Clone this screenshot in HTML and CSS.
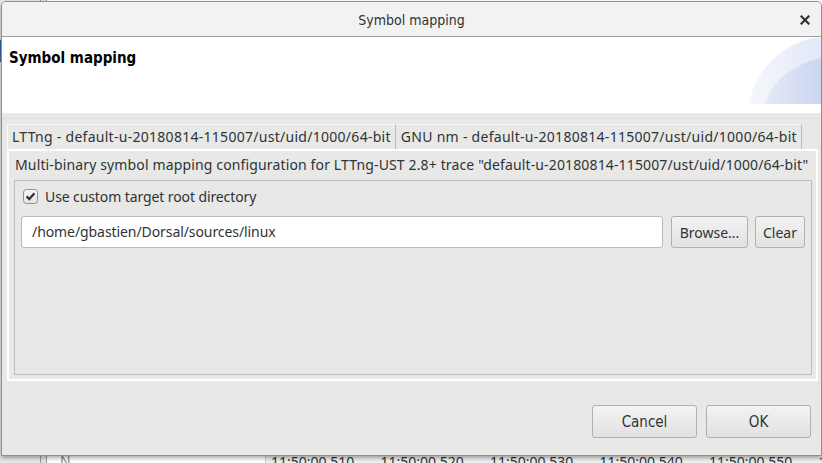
FILE: index.html
```html
<!DOCTYPE html>
<html>
<head>
<meta charset="utf-8">
<title>Symbol mapping</title>
<link rel="stylesheet" href="styles.css">
</head>
<body>
<div class="app">
  <div class="app-side"><span class="app-sel"></span></div>
  <div class="app-divider"></div>
  <div class="app-main">
    <div class="app-fill"></div>
    <div class="app-bottom">
      <div class="app-tree">N</div>
      <div class="app-times">
        <span>11:50:00.510</span>
        <span>11:50:00.520</span>
        <span>11:50:00.530</span>
        <span>11:50:00.540</span>
        <span>11:50:00.550</span>
        <span>1</span>
      </div>
    </div>
  </div>
</div>

<div class="dialog">
  <div class="titlebar">
    <span></span>
    <span class="title">Symbol mapping</span>
    <span class="close">
      <svg width="10" height="10" viewBox="0 0 10 10"><path d="M1.5 1.5 L8.5 8.5 M8.5 1.5 L1.5 8.5" stroke="#2e3436" stroke-width="2.2" stroke-linecap="square"/></svg>
    </span>
  </div>
  <div class="header">
    <div class="header-title">Symbol mapping</div>
    <svg class="header-deco" width="72" height="66" viewBox="0 0 72 66">
      <defs>
        <linearGradient id="g1" x1="0" y1="0" x2="1" y2="0">
          <stop offset="0" stop-color="#f5f7fc"/>
          <stop offset="1" stop-color="#e3e8f7"/>
        </linearGradient>
        <linearGradient id="g2" x1="0" y1="0" x2="1" y2="0">
          <stop offset="0" stop-color="#e4e9f7"/>
          <stop offset="1" stop-color="#ccd6f0"/>
        </linearGradient>
      </defs>
      <path d="M0 66 C4 38 28 8 64 0 L72 0 L72 66 Z" fill="url(#g1)"/>
      <path d="M16 66 C22 44 44 26 72 20 L72 66 Z" fill="url(#g2)"/>
    </svg>
  </div>
  <div class="content">
    <div class="sep"></div>
    <div class="tabs">
      <div class="tab active">LTTng - default-u-20180814-115007/ust/uid/1000/64-bit</div>
      <div class="tab">GNU nm - default-u-20180814-115007/ust/uid/1000/64-bit</div>
    </div>
    <div class="panel">
      <div class="desc">Multi-binary symbol mapping configuration for LTTng-UST 2.8+ trace "default-u-20180814-115007/ust/uid/1000/64-bit"</div>
      <div class="group">
        <div class="check">
          <span class="box">
            <svg width="15" height="15" viewBox="0 0 15 15">
              <defs>
                <linearGradient id="cb" x1="0" y1="0" x2="0" y2="1">
                  <stop offset="0" stop-color="#f7f7f7"/>
                  <stop offset="1" stop-color="#e3e3e3"/>
                </linearGradient>
              </defs>
              <rect x="0.5" y="0.5" width="14" height="14" rx="3" fill="url(#cb)" stroke="#919191"/>
              <path d="M3.6 7.4 L6.3 10.1 L11.4 4.3" fill="none" stroke="#2e3436" stroke-width="2.2"/>
            </svg>
          </span>
          <span>Use custom target root directory</span>
        </div>
        <div class="row">
          <div class="input">/home/gbastien/Dorsal/sources/linux</div>
          <button class="btn browse">Browse...</button>
          <button class="btn clear">Clear</button>
        </div>
      </div>
    </div>
    <div class="actions">
      <button class="btn big">Cancel</button>
      <button class="btn big">OK</button>
    </div>
  </div>
</div>
</body>
</html>
```
FILE: styles.css
```css
* { box-sizing: border-box; }

html, body {
  margin: 0;
  padding: 0;
}

body {
  width: 822px;
  height: 463px;
  overflow: hidden;
  position: relative;
  font-family: "Noto Sans", sans-serif;
  font-size: 14px;
  color: #2e3436;
  background: #ffffff;
}

/* background application */
.app {
  display: flex;
  width: 822px;
  height: 463px;
  overflow: hidden;
}

.app-side {
  flex: none;
  width: 40px;
  background: #e8e8e7;
  position: relative;
}

.app-sel {
  position: absolute;
  left: 0;
  top: 40px;
  width: 2px;
  height: 22px;
  background: #3465a4;
}

.app-divider {
  flex: none;
  width: 7px;
  background: #e4e4e4;
  border-left: 1px solid #9a9a9a;
  border-right: 1px solid #9a9a9a;
}

.app-main {
  flex: 1;
  min-width: 0;
  display: flex;
  flex-direction: column;
  background: #ffffff;
}

.app-fill { flex: 1; }

.app-bottom {
  flex: none;
  height: 10px;
  display: flex;
  overflow: hidden;
  line-height: 19px;
  font-size: 14px;
  color: #2e3436;
}

.app-tree {
  flex: none;
  width: 218px;
  padding-left: 13px;
  margin-top: -2px;
  color: #888888;
}

.app-times {
  flex: 1;
  min-width: 0;
  overflow: hidden;
  display: flex;
  background: #efefef;
  border-left: 1px solid #cfcfcf;
  margin-top: -1px;
}

.app-times span {
  width: 109.5px;
  flex: none;
  padding-left: 5px;
  white-space: nowrap;
}

/* dialog window */
.dialog {
  position: absolute;
  left: 1px;
  top: 1px;
  width: 821px;
  height: 455px;
  border: 1px solid #8f8f8f;
  border-radius: 5px 5px 0 0;
  background: #e8e8e7;
  box-shadow: 0 2px 4px rgba(0, 0, 0, 0.35);
  display: flex;
  flex-direction: column;
  overflow: hidden;
}

.titlebar {
  height: 35px;
  flex: none;
  display: grid;
  grid-template-columns: 1fr auto 1fr;
  align-items: center;
  background: #f2f2f2;
  border-bottom: 1px solid #9d9d9d;
  padding-top: 1px;
}

.title {
  font-family: "DejaVu Sans Condensed", "DejaVu Sans", sans-serif;
  font-stretch: condensed;
  font-size: 14px;
  color: #2e3436;
}

.close {
  justify-self: end;
  margin-right: 11px;
  display: flex;
}

.header {
  height: 76px;
  flex: none;
  background: #ffffff;
  display: flex;
  justify-content: space-between;
  align-items: flex-start;
}

.header-title {
  padding: 12px 0 0 7px;
  font-family: "DejaVu Sans Condensed", "DejaVu Sans", sans-serif;
  font-stretch: condensed;
  font-weight: bold;
  font-size: 15px;
  color: #000000;
}

.header-deco {
  display: block;
  margin-top: 1px;
}

.content {
  flex: 1;
  display: flex;
  flex-direction: column;
  padding: 5px 3px 0 5px;
}

.sep {
  height: 1px;
  background: #dedede;
  margin: 0 -3px 5px -5px;
}

.tabs {
  display: flex;
  height: 25px;
}

.tab {
  padding: 2px 4px 0 4px;
  line-height: 19px;
  white-space: nowrap;
  letter-spacing: 0.28px;
  border-top: 1px solid #f7f7f7;
  border-left: 1px solid #f7f7f7;
  border-right: 1px solid #bdbdbd;
  color: #2e3436;
}

.tab.active {
  background: #e8e8e7;
}

.tab + .tab {
  border-left: none;
  padding-left: 5px;
}

.panel {
  border: 2px solid #ffffff;
  height: 232px;
  padding: 4px 4px 4px 5px;
  display: flex;
  flex-direction: column;
}

.desc {
  padding-left: 1px;
  line-height: 19px;
  white-space: nowrap;
  letter-spacing: 0.14px;
  margin-bottom: 6px;
}

.group {
  flex: 1;
  border: 1px solid #bcbcbc;
  padding: 6px 6px 0 6px;
}

.check {
  display: flex;
  align-items: center;
  gap: 7px;
  padding-left: 2px;
  line-height: 19px;
  letter-spacing: -0.1px;
}

.box {
  display: flex;
  width: 15px;
  height: 15px;
}

.row {
  display: flex;
  align-items: center;
  margin-top: 10px;
}

.input {
  flex: 1;
  height: 32px;
  background: #ffffff;
  border: 1px solid #b9b9b9;
  border-radius: 3px;
  padding-left: 10px;
  line-height: 30px;
  white-space: nowrap;
  letter-spacing: -0.08px;
}

.btn {
  font-family: "Noto Sans", sans-serif;
  font-size: 14px;
  color: #2e3436;
  height: 32px;
  border: 1px solid #b0b0b0;
  border-radius: 3px;
  background: linear-gradient(#f3f3f3, #e1e1e1);
  padding: 0;
  margin: 0;
}

.browse {
  width: 77px;
  margin-left: 8px;
}

.clear {
  width: 50px;
  margin-left: 7px;
}

.actions {
  display: flex;
  justify-content: flex-end;
  gap: 9px;
  margin-top: 24px;
  padding-right: 7px;
}

.btn.big {
  width: 105px;
  height: 33px;
  font-family: "DejaVu Sans Condensed", "DejaVu Sans", sans-serif;
  font-stretch: condensed;
  font-size: 15px;
}
```
